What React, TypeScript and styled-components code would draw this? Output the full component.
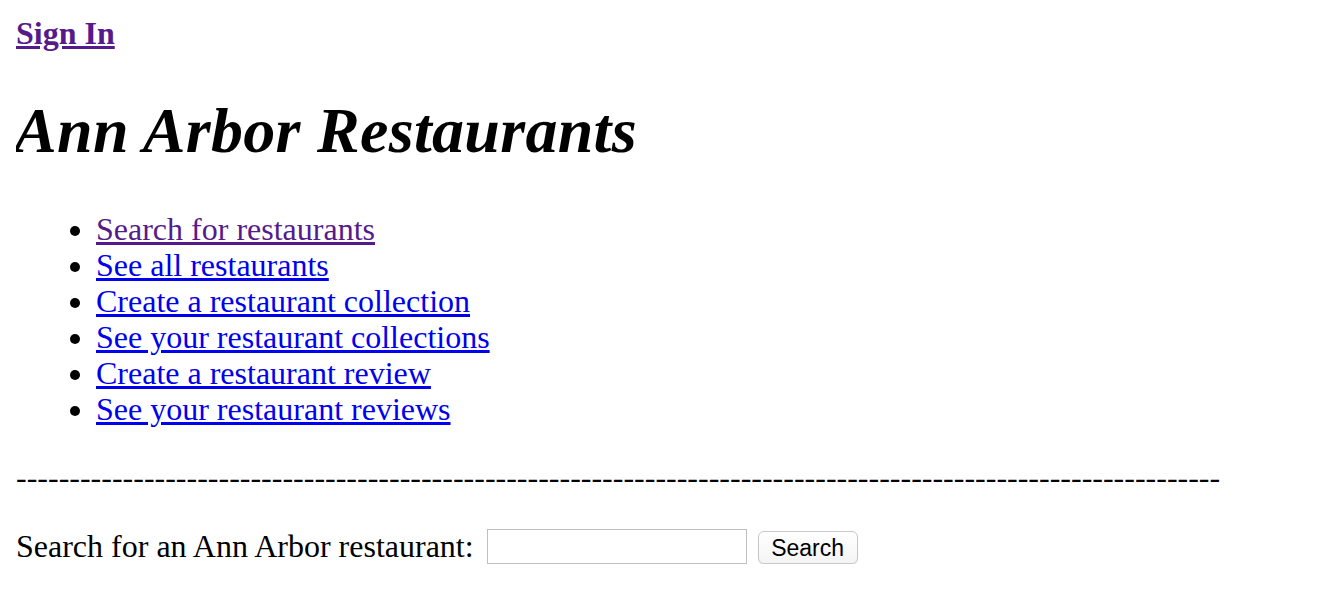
import React from "react";
import styled, { createGlobalStyle } from "styled-components";

const GlobalStyle = createGlobalStyle`
  body {
    margin: 15px 16px 16px;
    background: white;
    color: black;
    font-family: "Liberation Serif", "Times New Roman", serif;
    font-size: 32px;
    line-height: 36px;
  }
`;

const SignInLink = styled.a`
  font-weight: bold;
  color: #551a8b;
  text-decoration: underline;
`;

const Title = styled.h1`
  font-size: 64px;
  line-height: 74px;
  font-style: italic;
  font-weight: bold;
  letter-spacing: 0.3px;
  margin: 43px 0 43px -2px;
`;

const NavList = styled.ul`
  margin: 32px 0;
  padding-left: 80px;
  list-style: disc;
`;

const NavItem = styled.li``;

const NavLink = styled.a<{ $visited?: boolean }>`
  color: ${(p) => (p.$visited ? "#551a8b" : "#0000ee")};
  text-decoration: underline;
`;

const Divider = styled.p`
  margin: 32px 0 33px;
  white-space: nowrap;
`;

const SearchForm = styled.form`
  display: flex;
  align-items: center;
  margin: 0;
`;

const SearchLabel = styled.label`
  margin-right: 13px;
`;

const SearchInput = styled.input`
  width: 260px;
  height: 35px;
  margin: 1px 11px 0 0;
  box-sizing: border-box;
  border: 1px solid #c0c0c0;
  padding: 2px 4px;
  font-size: 22px;
`;

const SearchButton = styled.button`
  width: 100px;
  height: 33px;
  margin-top: 3px;
  box-sizing: border-box;
  border: 1px solid #c8c8c8;
  border-radius: 6px;
  background: linear-gradient(#ffffff, #f4f4f4);
  box-shadow: 0 1px 1px rgba(0, 0, 0, 0.12);
  font-family: "Liberation Sans", Arial, sans-serif;
  font-size: 23px;
  color: black;
  padding: 2px 0 0;
`;

const links = [
  { text: "Search for restaurants", visited: true },
  { text: "See all restaurants" },
  { text: "Create a restaurant collection" },
  { text: "See your restaurant collections" },
  { text: "Create a restaurant review" },
  { text: "See your restaurant reviews" },
];

export default function App() {
  return (
    <>
      <GlobalStyle />
      <SignInLink href="#">Sign In</SignInLink>
      <Title>Ann Arbor Restaurants</Title>
      <NavList>
        {links.map((l) => (
          <NavItem key={l.text}>
            <NavLink href="#" $visited={l.visited}>
              {l.text}
            </NavLink>
          </NavItem>
        ))}
      </NavList>
      <Divider>{"-".repeat(113)}</Divider>
      <SearchForm onSubmit={(e) => e.preventDefault()}>
        <SearchLabel htmlFor="q">Search for an Ann Arbor restaurant:</SearchLabel>
        <SearchInput id="q" type="text" />
        <SearchButton type="submit">Search</SearchButton>
      </SearchForm>
    </>
  );
}
